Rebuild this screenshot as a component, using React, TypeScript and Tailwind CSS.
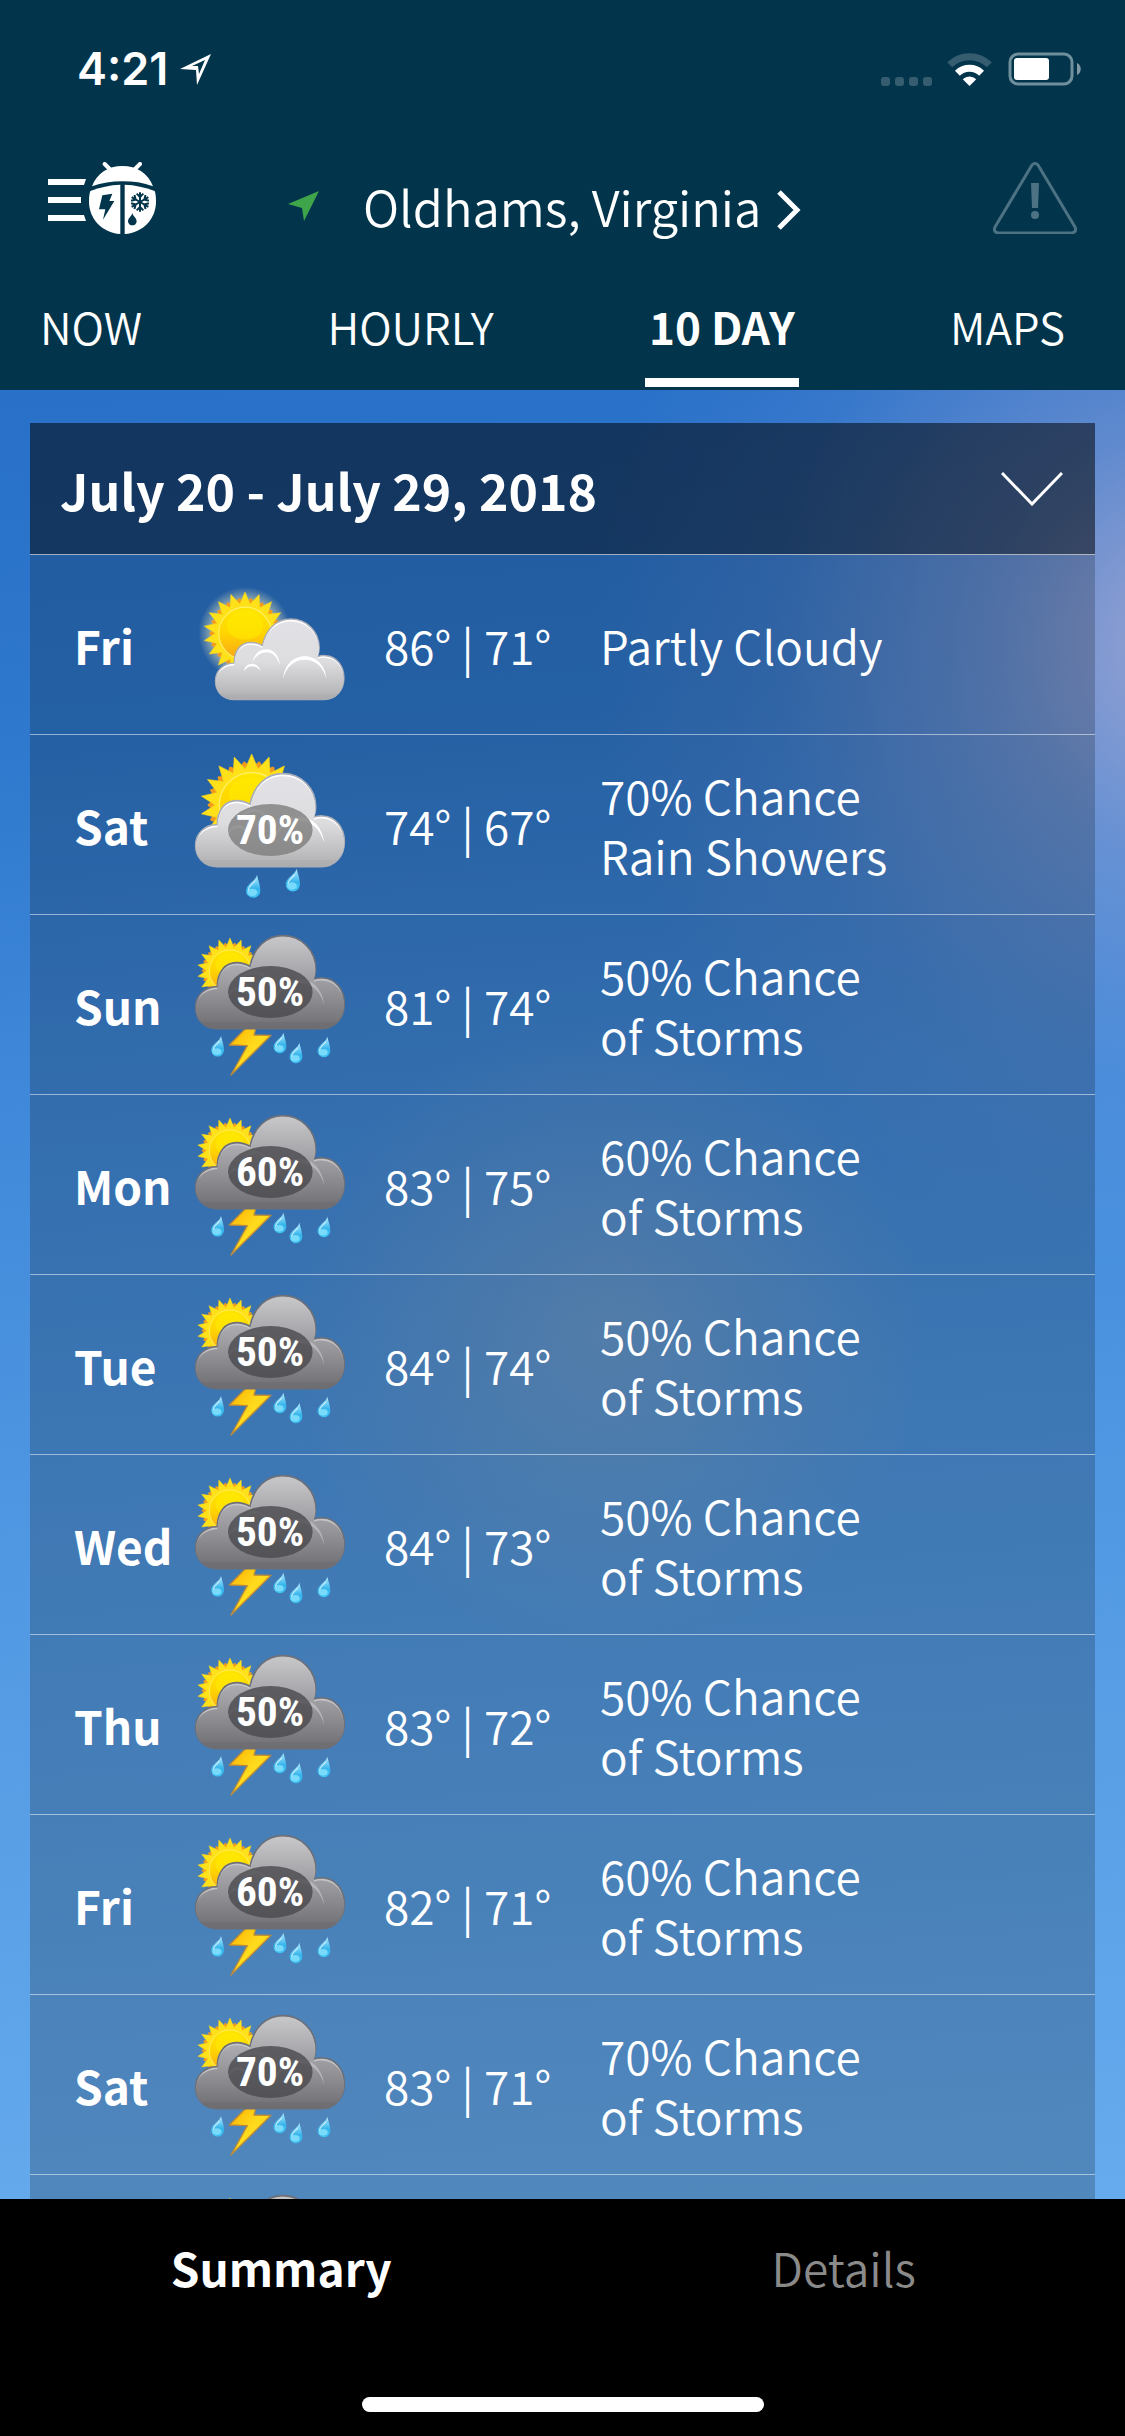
import { useId } from 'react';

type Sky = 'partly' | 'rain' | 'storm';
type Day = { day: string; high: number; low: number; sky: Sky; chance?: string; text: string[] };

const days: Day[] = [
  { day: 'Fri', high: 86, low: 71, sky: 'partly', text: ['Partly Cloudy'] },
  { day: 'Sat', high: 74, low: 67, sky: 'rain', chance: '70%', text: ['70% Chance', 'Rain Showers'] },
  { day: 'Sun', high: 81, low: 74, sky: 'storm', chance: '50%', text: ['50% Chance', 'of Storms'] },
  { day: 'Mon', high: 83, low: 75, sky: 'storm', chance: '60%', text: ['60% Chance', 'of Storms'] },
  { day: 'Tue', high: 84, low: 74, sky: 'storm', chance: '50%', text: ['50% Chance', 'of Storms'] },
  { day: 'Wed', high: 84, low: 73, sky: 'storm', chance: '50%', text: ['50% Chance', 'of Storms'] },
  { day: 'Thu', high: 83, low: 72, sky: 'storm', chance: '50%', text: ['50% Chance', 'of Storms'] },
  { day: 'Fri', high: 82, low: 71, sky: 'storm', chance: '60%', text: ['60% Chance', 'of Storms'] },
  { day: 'Sat', high: 83, low: 71, sky: 'storm', chance: '70%', text: ['70% Chance', 'of Storms'] },
];

const tabs = [
  { label: 'NOW', width: 'w-[136px]' },
  { label: 'HOURLY', width: '' },
  { label: '10 DAY', width: '', active: true },
  { label: 'MAPS', width: '' },
];

const CLOUD =
  'M142 380C100 380 77 350 77 316C77 280 104 254 142 254C142 210 165 182 200 182C215 182 228 186 240 193C252 135 290 101 338 101C395 101 437 145 437 200C437 212 435 222 431 232C440 228 450 227 460 228C498 230 523 265 523 305C523 348 495 380 455 380Z';

function star(points: number, outer: number, inner: number, turn: number) {
  const out: string[] = [];
  for (let i = 0; i < points * 2; i++) {
    const r = i % 2 ? inner : outer;
    const a = ((i * 180) / points + turn - 90) * (Math.PI / 180);
    out.push(`${(r * Math.cos(a)).toFixed(1)},${(r * Math.sin(a)).toFixed(1)}`);
  }
  return out.join(' ');
}

const RAYS = star(18, 153, 110, 0);
const SHADOW_RAYS = star(18, 128, 106, 10);

function Sun({ id, at, glow }: { id: string; at: string; glow?: boolean }) {
  return (
    <g transform={at}>
      {glow && <circle r="172" fill={`url(#${id}-glow)`} />}
      <polygon points={SHADOW_RAYS} fill="#f39a1d" stroke="#f39a1d" strokeWidth="8" strokeLinejoin="round" />
      <polygon points={RAYS} fill="#ffe11a" stroke="#f6d21c" strokeWidth="2" />
      <circle r="97" fill={`url(#${id}-sun)`} stroke="#fff06a" strokeWidth="4" />
      <ellipse cy="-30" rx="68" ry="54" fill="#ffee00" opacity="0.5" />
    </g>
  );
}

function Cloud({ id, at, dark }: { id: string; at: string; dark?: boolean }) {
  const edge = dark ? '#c4c4c7' : '#ffffff';
  return (
    <g transform={at}>
      <path d={CLOUD} fill={edge} stroke={dark ? '#6d7078' : '#a9adb8'} strokeWidth="5" />
      <g clipPath={`url(#${id}-clip)`}>
        <path d={CLOUD} transform="translate(0 8)" fill={`url(#${id}-cloud)`} />
        <rect x="77" y="360" width="446" height="22" fill={dark ? '#6b6b70' : '#a9a9ac'} opacity="0.5" />
      </g>
      <g fill={edge} opacity={dark ? 0.7 : 1}>
        <path d="M312 307C316 262 345 230 387 230C428 230 458 262 463 310C452 268 425 242 387 242C350 242 322 268 312 307Z" />
        <path d="M205 250C212 222 230 206 254 206C280 206 299 230 300 262C291 232 276 216 254 216C234 216 216 230 205 250Z" />
        <path d="M175 284C178 266 189 256 204 256C219 256 230 266 233 282C226 271 217 265 204 265C191 265 181 272 175 284Z" />
      </g>
    </g>
  );
}

function Drop({ id, x, y, size = 1 }: { id: string; x: number; y: number; size?: number }) {
  return (
    <g transform={`translate(${x} ${y}) scale(${size})`}>
      <path d="M0 0C-3 18-33 27-33 47A21 21 0 0 0 10 47C10 30 4 18 0 0Z" fill={`url(#${id}-drop)`} />
      <ellipse cx="-14" cy="52" rx="15" ry="11" fill="#8fe6ff" opacity="0.75" />
      <path d="M-6 18C-12 27-25 34-26 45" fill="none" stroke="#d9f6ff" strokeWidth="4" strokeLinecap="round" opacity="0.8" />
    </g>
  );
}

function SkyIcon({ sky, chance, className }: { sky: Sky; chance?: string; className: string }) {
  const id = useId();
  const dark = sky === 'storm';
  const cy = dark ? 216 : 270;
  return (
    <svg viewBox="60 0 480 510" className={className} role="img" aria-label={sky}>
      <defs>
        <linearGradient id={`${id}-sun`} x1="0" y1="0" x2="0" y2="1">
          <stop offset="0" stopColor="#ffe600" />
          <stop offset="0.5" stopColor="#ffd400" />
          <stop offset="1" stopColor="#f9a51a" />
        </linearGradient>
        <radialGradient id={`${id}-glow`}>
          <stop offset="0.6" stopColor="#fff7c0" stopOpacity="0.7" />
          <stop offset="1" stopColor="#fff7c0" stopOpacity="0" />
        </radialGradient>
        <linearGradient id={`${id}-cloud`} x1="0" y1="0" x2="0" y2="1">
          <stop offset="0" stopColor={dark ? '#c6c6c9' : '#e2e2e6'} />
          <stop offset="0.5" stopColor={dark ? '#9b9b9f' : '#dddde0'} />
          <stop offset="1" stopColor={dark ? '#6c6c70' : '#adadb0'} />
        </linearGradient>
        <linearGradient id={`${id}-drop`} x1="0" y1="0" x2="0" y2="1">
          <stop offset="0" stopColor="#b5ecff" />
          <stop offset="0.6" stopColor="#35b4ec" />
          <stop offset="1" stopColor="#3fc4f5" />
        </linearGradient>
        <linearGradient id={`${id}-bolt`} x1="0" y1="0" x2="1" y2="1">
          <stop offset="0" stopColor="#ffb000" />
          <stop offset="0.5" stopColor="#ffdc1e" />
          <stop offset="1" stopColor="#ffa800" />
        </linearGradient>
        <clipPath id={`${id}-clip`}>
          <path d={CLOUD} />
        </clipPath>
      </defs>

      {sky === 'partly' && (
        <>
          <Sun id={id} at="translate(225 220) scale(0.81)" glow />
          <Cloud id={id} at="translate(70 90) scale(0.864)" />
        </>
      )}
      {sky === 'rain' && (
        <>
          <Sun id={id} at="translate(245 195)" />
          <Cloud id={id} at="translate(0 0)" />
          <Drop id={id} x={261} y={405} />
          <Drop id={id} x={380} y={386} />
        </>
      )}
      {sky === 'storm' && (
        <>
          <Sun id={id} at="translate(180 152) scale(0.64)" />
          <polygon
            points="232,320 259,320 252,345 303,346 183,465 232,377 178,375"
            fill={`url(#${id}-bolt)`}
            stroke="#b98a3a"
            strokeWidth="4"
            strokeLinejoin="round"
          />
          <Cloud id={id} at="translate(0 -54)" dark />
          <Drop id={id} x={153} y={348} size={0.9} />
          <Drop id={id} x={340} y={338} size={0.9} />
          <Drop id={id} x={388} y={368} size={0.9} />
          <Drop id={id} x={472} y={350} size={0.9} />
        </>
      )}
      {chance && (
        <>
          <ellipse cx="301" cy={cy} rx="127" ry="78" fill={dark ? '#4a4a4d' : '#7d7d7d'} opacity="0.8" />
          <text
            x="300"
            y={cy + 42}
            textAnchor="middle"
            fill="#fff"
            className="text-[124px] font-bold [font-family:'Roboto_Condensed','Liberation_Sans',sans-serif]"
          >
            {chance}
          </text>
        </>
      )}
    </svg>
  );
}

function BugLogo() {
  return (
    <svg viewBox="54 66 324 216" className="h-[72px] w-[108px]" fill="#fff" aria-hidden="true">
      <path d="M54 117H168L162 135H54ZM54 171H153V189H54ZM54 225H162L168 243H54Z" />
      <path d="M224 72L242 90M330 72L312 90" stroke="#fff" strokeWidth="12" strokeLinecap="round" />
      <path d="M186 139C200 100 235 78 277 78C320 78 355 100 369 139C340 128 310 124 277 124C245 124 215 129 186 139Z" />
      <path d="M271 134V282C215 278 177 235 177 185C177 172 178 162 181 153C210 142 240 135 271 134Z" />
      <path d="M284 134V282C340 278 378 235 378 185C378 172 377 162 374 153C345 142 315 135 284 134Z" />
      <path d="M217 166L247 161L238 183L253 183L219 239L226 208H207Z" fill="#02354b" />
      <path d="M307 220C303 231 294 235 294 244A13 12 0 0 0 320 244C320 235 311 231 307 220Z" fill="#02354b" />
      <g stroke="#02354b" strokeWidth="6">
        {[0, 60, 120, 180, 240, 300].map((a) => (
          <path key={a} d="M330 186V157M320 161L330 171L340 161" fill="none" transform={`rotate(${a} 330 186)`} />
        ))}
      </g>
    </svg>
  );
}

function StatusBar() {
  return (
    <div className="flex items-center justify-between pt-11 pr-11 pl-[77px]">
      <div className="flex items-center gap-3">
        <span className="text-[45px] leading-[50px] font-semibold [font-family:Inter,'Liberation_Sans',sans-serif]">4:21</span>
        <svg viewBox="0 0 31 31" className="size-[31px]" fill="#fff" fillRule="evenodd" aria-hidden="true">
          <path d="M31 0L17 31L16 16L0 15ZM25 6L12 12H18L19 20Z" />
        </svg>
      </div>
      <div className="flex items-center">
        <div className="mt-6 flex gap-[5px]">
          {[0, 1, 2, 3].map((i) => (
            <span key={i} className="size-[9px] rounded-[3px] bg-[#355d6f]" />
          ))}
        </div>
        <svg viewBox="380 34 140 104" className="ml-[14px] h-[35px] w-[47px]" fill="none" aria-hidden="true">
          <path d="M391 72A84 84 0 0 1 509 72" stroke="#355d6f" strokeWidth="21" />
          <path d="M414 97A52 52 0 0 1 486 97" stroke="#fff" strokeWidth="21" />
          <path d="M450 135L430 115A28 28 0 0 1 470 115Z" fill="#fff" />
        </svg>
        <svg viewBox="0 0 73 34" className="ml-[15px] h-[34px] w-[73px]" fill="none" aria-hidden="true">
          <rect x="2" y="2" width="62" height="30" rx="8" stroke="#6f8f9d" strokeWidth="3" />
          <rect x="6" y="6" width="35" height="22" rx="3" fill="#fff" />
          <path d="M69 11C74 13 74 21 69 23Z" fill="#8099a5" />
        </svg>
      </div>
    </div>
  );
}

function DayRow({ item }: { item: Day }) {
  return (
    <li className="flex h-[180px] items-center border-b border-white/50 pl-[44px]">
      <span className="w-[116px] text-[46px] leading-[60px] font-bold whitespace-nowrap">{item.day}</span>
      <SkyIcon sky={item.sky} chance={item.chance} className="h-[170px] w-40 shrink-0" />
      <span className="ml-[34px] w-[216px] shrink-0 text-[46px] leading-[60px] whitespace-nowrap">
        {item.high}° | {item.low}°
      </span>
      <p className="text-[46px] leading-[60px] whitespace-nowrap">
        {item.text.map((line) => (
          <span key={line} className="block">
            {line}
          </span>
        ))}
      </p>
    </li>
  );
}

export default function App() {
  return (
    <div className="flex h-screen flex-col overflow-hidden bg-black font-[350] text-white [font-family:'Noto_Sans_CJK_SC','Open_Sans',sans-serif]">
      <header className="bg-[#02354b] pb-[3px]">
        <StatusBar />

        <div className="mt-[68px] flex items-start px-12">
          <button type="button" aria-label="Menu">
            <BugLogo />
          </button>
          <button type="button" className="mt-4 ml-[132px] flex items-center text-[49px] leading-[56px] whitespace-nowrap">
            <svg viewBox="0 0 31 30" className="h-[30px] w-[31px]" fill="#3fa54a" aria-hidden="true">
              <path d="M31 0L16 30L14 17L0 13Z" />
            </svg>
            <span className="ml-11">Oldhams, Virginia</span>
            <svg viewBox="0 0 24 40" className="mt-2 ml-4 h-10 w-6" fill="none" stroke="#fff" strokeWidth="5" aria-hidden="true">
              <path d="M2 2L20 20L2 38" />
            </svg>
          </button>
          <button type="button" aria-label="Alerts" className="ml-auto">
            <svg viewBox="0 0 84 72" className="h-[72px] w-[84px]" fill="none" aria-hidden="true">
              <path d="M39 3Q42 0 45 3L82 65Q84 70 79 71H5Q0 70 2 65Z" stroke="#4d7283" strokeWidth="3" strokeLinejoin="round" />
              <path d="M38 21H46L45 46H39Z" fill="#4d7283" />
              <circle cx="42" cy="53" r="4" fill="#4d7283" />
            </svg>
          </button>
        </div>

        <nav className="mt-[68px] flex justify-between pr-[60px] pl-10">
          {tabs.map((tab) => (
            <a
              key={tab.label}
              href="#"
              className={`border-b-[9px] pb-7 text-[44px] leading-[48px] whitespace-nowrap ${tab.width} ${
                tab.active ? 'border-white px-1 font-bold' : 'border-transparent'
              }`}
            >
              {tab.label}
            </a>
          ))}
        </nav>
      </header>

      <main className="min-h-0 flex-1 overflow-hidden bg-[radial-gradient(ellipse_600px_620px_at_106%_14%,rgba(190,178,212,0.75),rgba(160,165,212,0.45)_35%,rgba(140,155,215,0.14)_70%,transparent),radial-gradient(circle_320px_at_54%_52%,rgba(145,170,195,0.42),transparent),linear-gradient(176deg,#2870c8_0%,#2e78cd_18%,#4089da_38%,#5098e2_62%,#66abed_100%)] px-[30px] pt-[33px]">
        <section className="bg-black/20">
          <button
            type="button"
            className="flex h-[132px] w-full items-center justify-between border-b border-white/60 bg-black/40 pr-8 pl-[30px]"
          >
            <span className="text-[50px] leading-[60px] font-bold whitespace-nowrap">July 20 - July 29, 2018</span>
            <svg viewBox="0 0 62 34" className="h-[34px] w-[62px]" fill="none" stroke="#fff" strokeWidth="3" aria-hidden="true">
              <path d="M1 1L31 32L61 1" />
            </svg>
          </button>
          <ul>
            {days.map((item, i) => (
              <DayRow key={i} item={item} />
            ))}
            <li className="h-[180px] pt-[5px] pl-40">
              <SkyIcon sky="storm" className="h-[170px] w-40" />
            </li>
          </ul>
        </section>
      </main>

      <footer className="bg-black pt-[38px] pb-6">
        <div className="grid grid-cols-2 text-center text-[46px] leading-[60px]">
          <button type="button" className="font-bold">
            Summary
          </button>
          <button type="button" className="text-[#8a8a8a]">
            Details
          </button>
        </div>
        <div className="mx-auto mt-[100px] h-[15px] w-[402px] rounded-full bg-white" />
      </footer>
    </div>
  );
}
